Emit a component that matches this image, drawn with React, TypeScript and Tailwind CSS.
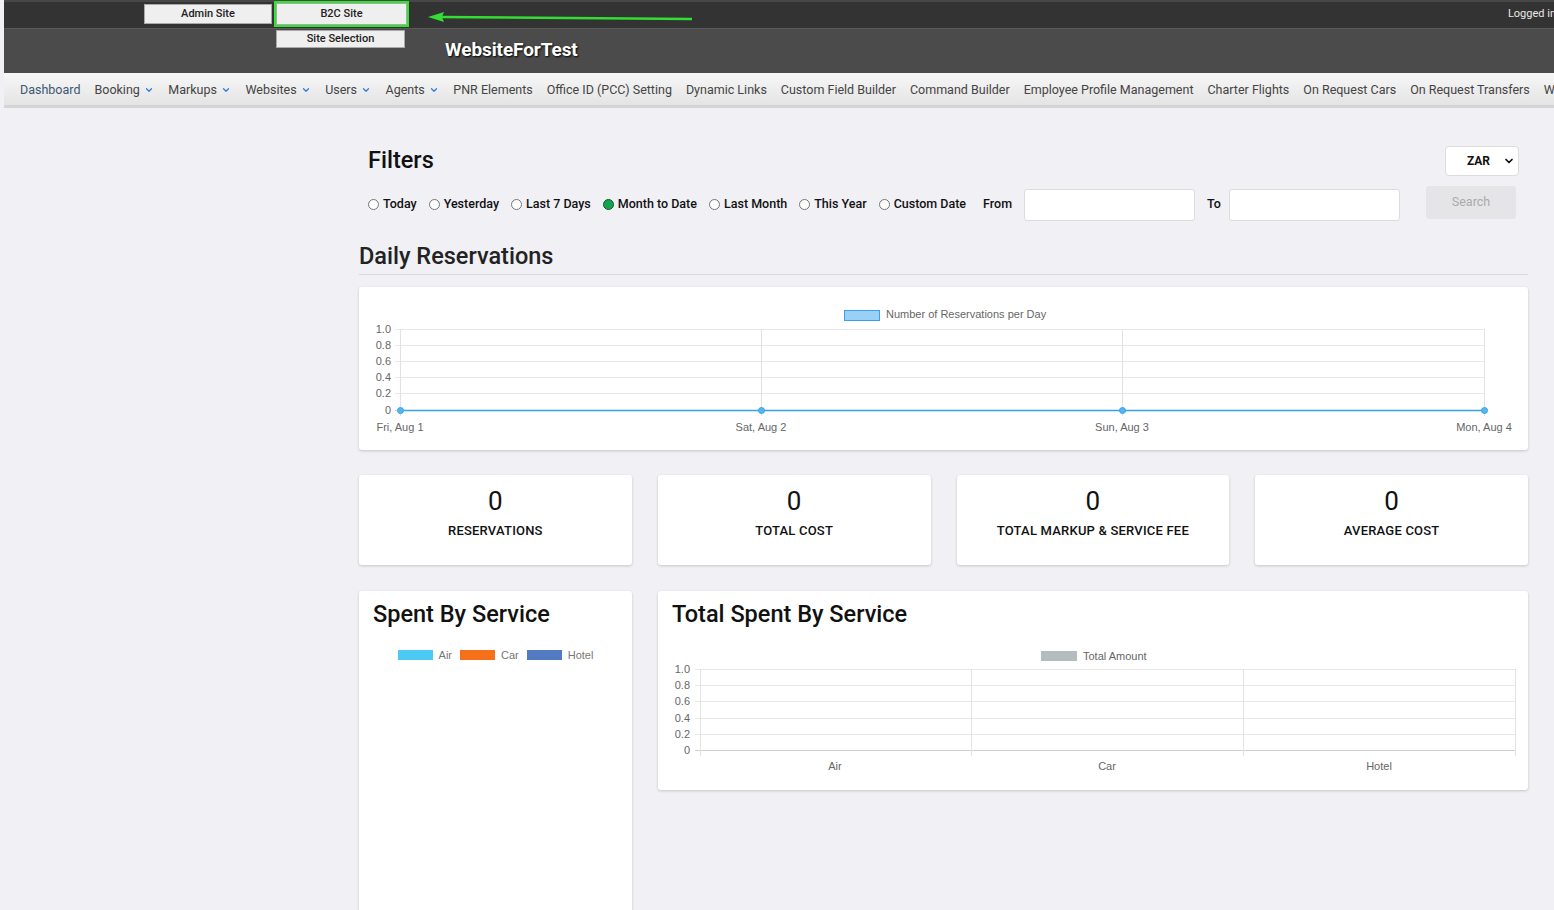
import { ChevronDown } from 'lucide-react';

const font = { fontFamily: 'Roboto, "Liberation Sans", Arial, sans-serif' };

const navItems: { label: string; drop?: boolean }[] = [
  { label: 'Dashboard' },
  { label: 'Booking', drop: true },
  { label: 'Markups', drop: true },
  { label: 'Websites', drop: true },
  { label: 'Users', drop: true },
  { label: 'Agents', drop: true },
  { label: 'PNR Elements' },
  { label: 'Office ID (PCC) Setting' },
  { label: 'Dynamic Links' },
  { label: 'Custom Field Builder' },
  { label: 'Command Builder' },
  { label: 'Employee Profile Management' },
  { label: 'Charter Flights' },
  { label: 'On Request Cars' },
  { label: 'On Request Transfers' },
  { label: 'Workflows' },
];

const ranges = ['Today', 'Yesterday', 'Last 7 Days', 'Month to Date', 'Last Month', 'This Year', 'Custom Date'];

const stats = ['RESERVATIONS', 'TOTAL COST', 'TOTAL MARKUP & SERVICE FEE', 'AVERAGE COST'];

const Radio = ({ checked }: { checked: boolean }) =>
  checked ? (
    <span className="w-[11px] h-[11px] rounded-full bg-[#14a44d] border border-[#0b5c2b] shrink-0" />
  ) : (
    <span className="w-[11px] h-[11px] rounded-full bg-white border border-[#767676] shrink-0" />
  );

const DailyChart = () => {
  const ys = [42, 58, 74, 90, 106, 123];
  const labels = ['1.0', '0.8', '0.6', '0.4', '0.2', '0'];
  const xs = [41, 402, 763, 1125];
  const days = ['Fri, Aug 1', 'Sat, Aug 2', 'Sun, Aug 3', 'Mon, Aug 4'];
  return (
    <svg width="1169" height="163" viewBox="0 0 1169 163" className="block" style={{ fontFamily: '"Liberation Sans", Arial, sans-serif' }}>
      <rect x="485.5" y="23.5" width="35" height="10" fill="#9ad0f5" stroke="#36a2eb" />
      <text x="527" y="31" fontSize="11" fill="#666">Number of Reservations per Day</text>
      {ys.map((y, i) => (
        <g key={y}>
          <line x1="36" x2="1125" y1={y + 0.5} y2={y + 0.5} stroke={i === 5 ? '#d0d0d0' : '#e8e8e8'} />
          <text x="32" y={y + 4} fontSize="11" fill="#666" textAnchor="end">{labels[i]}</text>
        </g>
      ))}
      {xs.map((x, i) => (
        <g key={x}>
          <line x1={x + 0.5} x2={x + 0.5} y1="42" y2="129" stroke="#e2e2e2" />
          <text x={x} y="144" fontSize="11" fill="#666" textAnchor="middle">{days[i]}</text>
        </g>
      ))}
      <line x1="41" x2="1125" y1="123.5" y2="123.5" stroke="#36a2eb" strokeWidth="1.5" />
      {xs.map((x) => (
        <circle key={x} cx={x + 0.5} cy="123.5" r="3" fill="#5ab4ee" stroke="#36a2eb" />
      ))}
    </svg>
  );
};

const TotalChart = () => {
  const ys = [36, 52, 68, 85, 101, 117];
  const labels = ['1.0', '0.8', '0.6', '0.4', '0.2', '0'];
  const xs = [42, 313, 585, 857];
  const cats = [
    { x: 177, t: 'Air' },
    { x: 449, t: 'Car' },
    { x: 721, t: 'Hotel' },
  ];
  return (
    <svg width="870" height="157" viewBox="0 0 870 157" className="block" style={{ fontFamily: '"Liberation Sans", Arial, sans-serif' }}>
      <rect x="383" y="18" width="36" height="10" fill="#b4bcbf" />
      <text x="425" y="27" fontSize="11" fill="#666">Total Amount</text>
      {ys.map((y, i) => (
        <g key={y}>
          <line x1="37" x2="857" y1={y + 0.5} y2={y + 0.5} stroke={i === 5 ? '#cfcfcf' : '#e8e8e8'} />
          <text x="32" y={y + 4} fontSize="11" fill="#666" textAnchor="end">{labels[i]}</text>
        </g>
      ))}
      {xs.map((x) => (
        <line key={x} x1={x + 0.5} x2={x + 0.5} y1="36" y2="123" stroke="#e4e4e4" />
      ))}
      {cats.map((c) => (
        <text key={c.t} x={c.x} y="137" fontSize="11" fill="#666" textAnchor="middle">{c.t}</text>
      ))}
    </svg>
  );
};

export default function App() {
  return (
    <div className="min-h-[910px] bg-[#f0f0f5] pl-[4px] overflow-hidden" style={font}>
      {/* top bar */}
      <div className="relative h-[28px] bg-[#333333] border-t-2 border-[#474747] flex items-start pl-[140px]">
        <button className="mt-[2px] w-[128px] h-[20px] bg-[#efefef] border border-[#a9a9a9] text-[11px] font-medium text-[#222]">
          Admin Site
        </button>
        <div className="flex ml-[2px] -mt-[1px] border-2 border-[#2ee52e]">
          <button className="w-[131px] h-[22px] bg-[#efefef] border border-[#a9a9a9] text-[11px] font-medium text-[#222]">
            B2C Site
          </button>
        </div>
        <svg className="absolute left-[424px] top-[8px]" width="270" height="18" viewBox="0 0 270 18">
          <line x1="12" y1="7" x2="264" y2="9" stroke="#33dd33" strokeWidth="2.5" />
          <polygon points="0,7 16,2 14,7 16,12" fill="#33dd33" />
        </svg>
        <span className="absolute right-[-2px] top-[4px] text-[11px] text-[#e8e8e8]">Logged in</span>
      </div>
      {/* brand bar */}
      <div className="h-[45px] bg-[#4b4b4b] border-t border-[#5a5a5a] flex items-start pl-[272px]">
        <button className="mt-[1px] w-[129px] h-[18px] bg-[#efefef] border border-[#a9a9a9] text-[11px] font-medium text-[#222]">
          Site Selection
        </button>
        <span
          className="ml-[40px] mt-[7px] text-[19px] font-bold text-white tracking-[-0.1px]"
          style={{ textShadow: '1px 1px 2px #000' }}
        >
          WebsiteForTest
        </span>
      </div>
      {/* nav */}
      <div className="h-[35px] bg-gradient-to-b from-[#f7f7f7] to-[#e4e4e4] border-b-[3px] border-[#d4d4d4] flex items-center pl-[16px] pt-[2px] gap-[14px] whitespace-nowrap">
        {navItems.map((n, i) => (
          <span key={n.label} className={`flex items-center gap-[4px] text-[12.5px] ${i === 0 ? 'text-[#3c5773]' : 'text-[#444]'}`}>
            {n.label}
            {n.drop && <ChevronDown className="w-[10px] h-[10px] text-[#2f7bd9] mr-[0.5px]" strokeWidth={3} />}
          </span>
        ))}
      </div>

      {/* content */}
      <div className="pl-[355px] pr-[26px] pt-[38px]">
        <div className="px-[9px]">
          <div className="flex justify-between items-center">
            <h1 className="text-[23.5px] font-medium text-[#111] leading-none">Filters</h1>
            <div className="w-[74px] h-[30px] bg-white border border-[#dcdcdc] rounded-[4px] flex items-center justify-end pr-[3px] gap-[13px]">
              <span className="text-[12px] font-bold text-[#111]">ZAR</span>
              <ChevronDown className="w-[12px] h-[12px] text-[#111]" strokeWidth={3.5} />
            </div>
          </div>
          <div className="flex items-center mt-[13px] h-[32px]">
            {ranges.map((r, i) => (
              <label key={r} className="flex items-center gap-[4px] mr-[12px] text-[12.5px] font-medium text-[#111] -mt-[1px]">
                <Radio checked={i === 3} />
                {r}
              </label>
            ))}
            <span className="ml-[5px] text-[12.5px] font-medium text-[#111] -mt-[1px]">From</span>
            <div className="ml-[12px] w-[171px] h-[32px] bg-white border border-[#dcdcdc] rounded-[3px]" />
            <span className="ml-[12px] text-[12.5px] font-medium text-[#111] -mt-[1px]">To</span>
            <div className="ml-[8px] w-[171px] h-[32px] bg-white border border-[#dcdcdc] rounded-[3px]" />
            <button className="ml-auto -mt-[5px] mr-[3px] w-[90px] h-[33px] bg-[#e5e5e8] rounded-[3px] text-[12.5px] text-[#aaa]">
              Search
            </button>
          </div>
        </div>

        <h2 className="mt-[21px] text-[23.5px] font-medium text-[#222] leading-[28px] pb-[4px] border-b border-[#d9d9de]">
          Daily Reservations
        </h2>

        <div className="mt-[12px] bg-white rounded-[3px] shadow-[0_1px_3px_rgba(0,0,0,0.18)] overflow-hidden">
          <DailyChart />
        </div>

        <div className="mt-[25px] grid grid-cols-4 gap-[26px]">
          {stats.map((s) => (
            <div key={s} className="h-[90px] bg-white rounded-[3px] shadow-[0_1px_3px_rgba(0,0,0,0.18)] flex flex-col items-center pt-[11px]">
              <span className="text-[26px] leading-[30px] text-[#111]">0</span>
              <span className="mt-[5px] text-[13px] font-medium text-[#111] tracking-[0.2px]">{s}</span>
            </div>
          ))}
        </div>

        <div className="mt-[26px] flex gap-[26px] items-start">
          <div className="w-[273px] shrink-0 h-[340px] bg-white rounded-[3px] shadow-[0_1px_3px_rgba(0,0,0,0.18)] px-[14px] pt-[9px]">
            <h3 className="text-[23.5px] font-medium text-[#111] leading-[28px]">Spent By Service</h3>
            <div className="mt-[19px] flex justify-center items-center gap-[6px] text-[11px] text-[#777]" style={{ fontFamily: '"Liberation Sans", Arial, sans-serif' }}>
              <span className="w-[35px] h-[10px] bg-[#4dc9f6]" />
              <span className="mr-[2px]">Air</span>
              <span className="w-[35px] h-[10px] bg-[#f67019]" />
              <span className="mr-[2px]">Car</span>
              <span className="w-[35px] h-[10px] bg-[#537bc4]" />
              <span>Hotel</span>
            </div>
          </div>
          <div className="flex-1 bg-white rounded-[3px] shadow-[0_1px_3px_rgba(0,0,0,0.18)] pt-[9px]">
            <h3 className="px-[14px] text-[23.5px] font-medium text-[#111] leading-[28px]">Total Spent By Service</h3>
            <div className="mt-[5px]">
              <TotalChart />
            </div>
          </div>
        </div>
      </div>
    </div>
  );
}
